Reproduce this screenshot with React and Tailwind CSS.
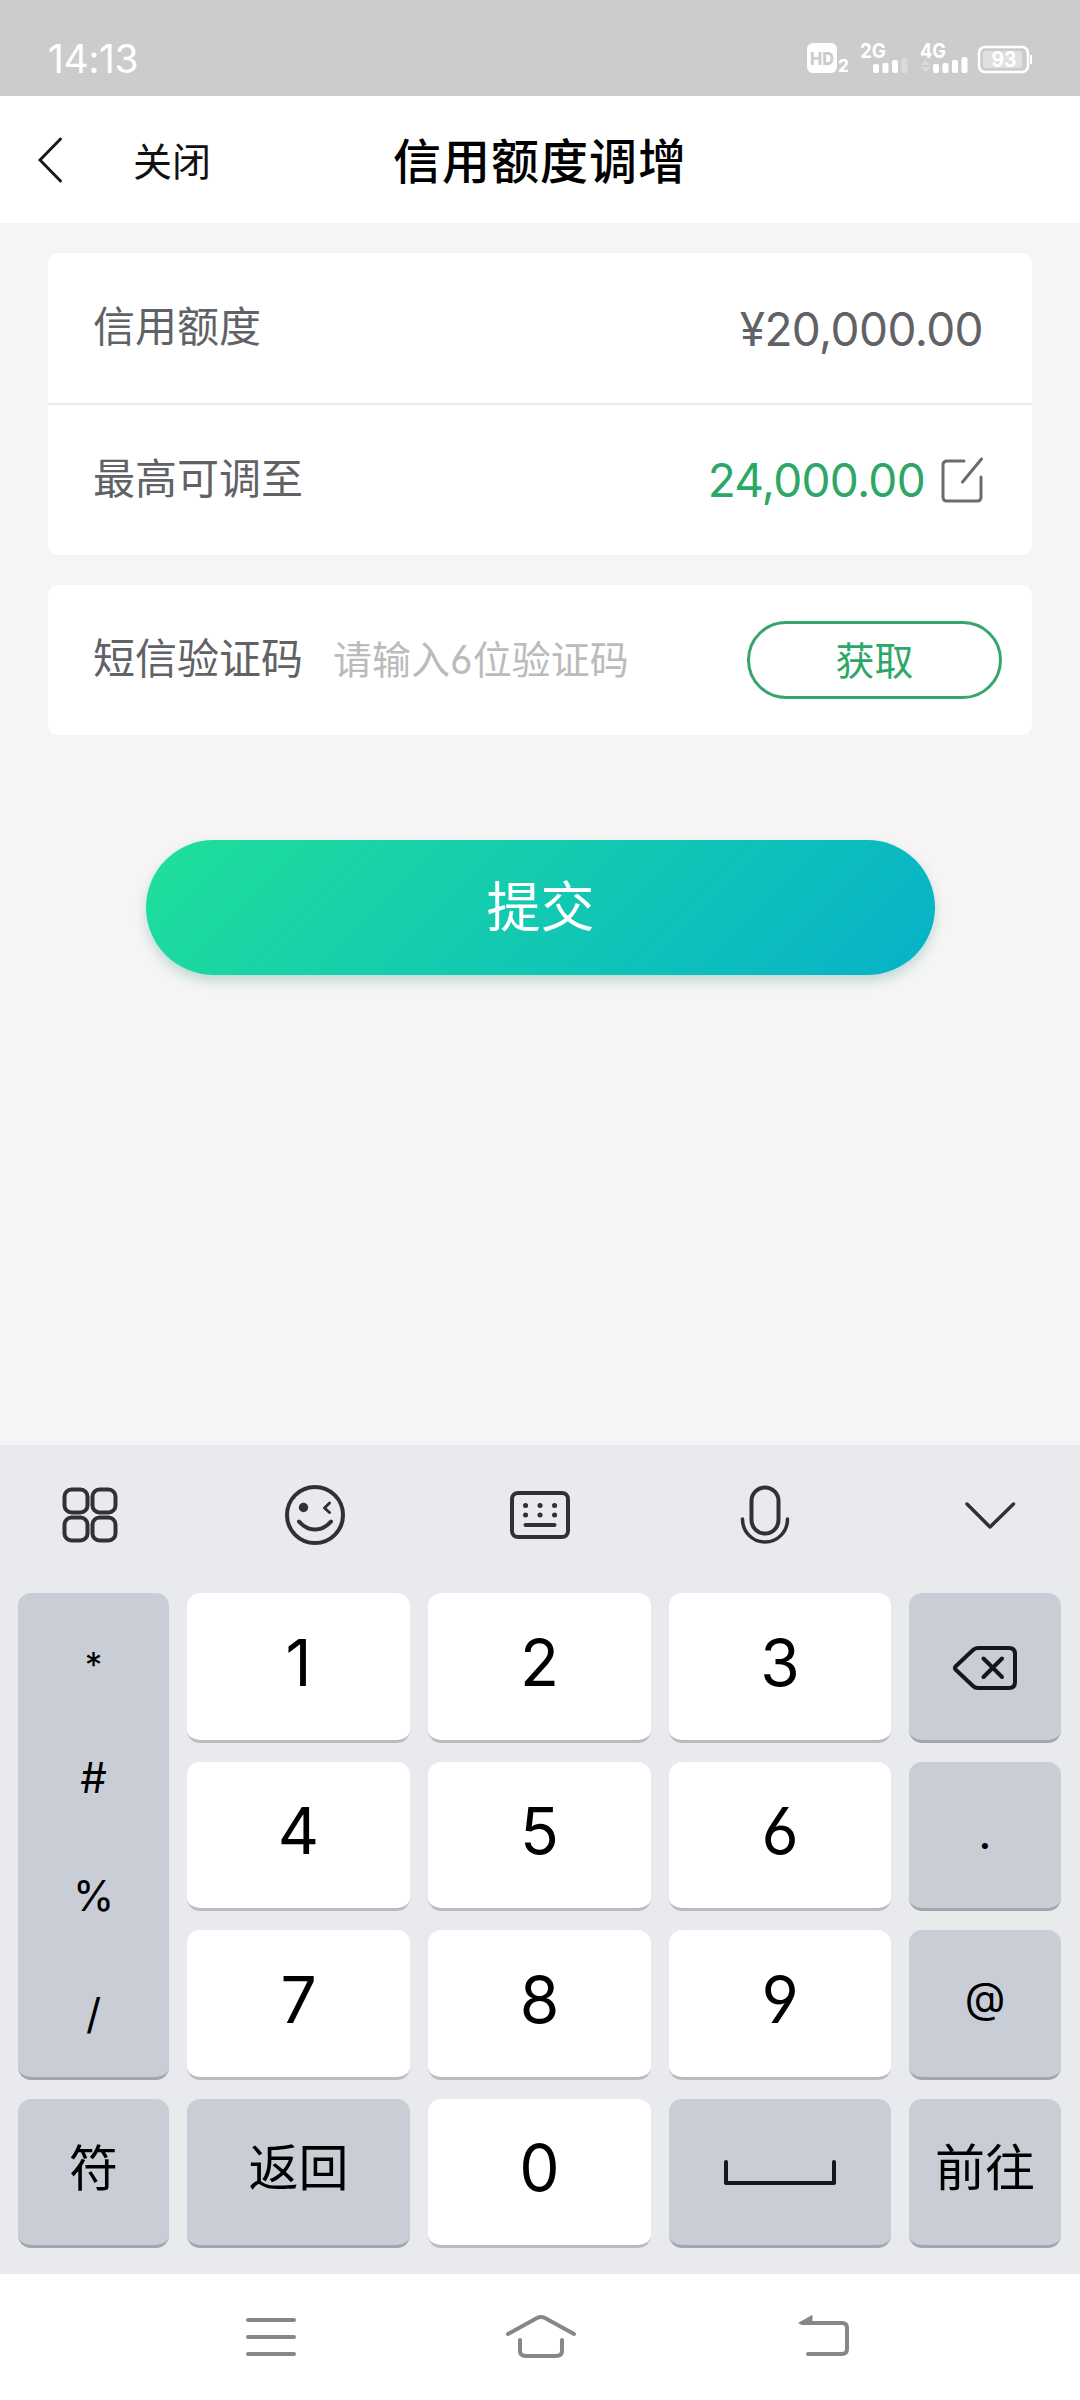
import React, { useState } from 'react';

const columnaSimbolos = ['*', '#', '%', '/'];

function BarraEstado() {
    return (
        <div className="flex h-24 items-start justify-between bg-[#cccccc] pl-12 pr-12 pt-[31px] text-white">
            <span className="pt-1 font-['Inter'] text-[39px] leading-[47px] tracking-[-0.4px]">14:13</span>
            <svg width="226" height="48" viewBox="806 31 226 48" fill="white">
                <rect x="807" y="43" width="30" height="30" rx="6" />
                <text x="822" y="65" fontSize="18" fontWeight="800" fontFamily="Inter" fill="#cccccc" textAnchor="middle" textLength="24" lengthAdjust="spacingAndGlyphs">HD</text>
                <text x="838" y="72" fontSize="17" fontWeight="800" fontFamily="Inter">2</text>
                <text x="860" y="58" fontSize="20" fontWeight="700" fontFamily="Inter" textLength="26" lengthAdjust="spacingAndGlyphs">2G</text>
                <rect x="873" y="64" width="6" height="9" rx="2" />
                <rect x="882.500" y="63" width="6" height="10" rx="2" />
                <rect x="892" y="60" width="6" height="13" rx="2" />
                <rect x="901.500" y="58" width="6" height="15" rx="2" opacity="0.3" />
                <text x="920" y="58" fontSize="20" fontWeight="700" fontFamily="Inter" textLength="26" lengthAdjust="spacingAndGlyphs">4G</text>
                <path d="M921 65 L925.500 60 L930 65 Z M921 67 L930 67 L925.500 72 Z" opacity="0.3" />
                <rect x="933" y="64" width="6" height="9" rx="2" />
                <rect x="942.500" y="63" width="6" height="10" rx="2" />
                <rect x="952" y="60" width="6" height="13" rx="2" />
                <rect x="961.500" y="57" width="6" height="16" rx="2" />
                <rect x="979" y="47" width="49" height="25" rx="6" fill="none" stroke="white" strokeWidth="2.500" />
                <rect x="983" y="51" width="39" height="17" rx="2" opacity="0.4" />
                <rect x="1030" y="55" width="2" height="9" />
                <text x="1004" y="67" fontSize="21" fontWeight="700" fontFamily="Inter" textAnchor="middle" textLength="25" lengthAdjust="spacingAndGlyphs">93</text>
            </svg>
        </div>
    );
}

function Encabezado() {
    return (
        <header className="grid h-[127px] grid-cols-[1fr_auto_1fr] items-center bg-white">
            <div className="flex items-center pl-[38px]">
                <svg width="25" height="46" viewBox="0 0 25 46" fill="none" stroke="#1a1a1a" strokeWidth="3" strokeLinecap="round">
                    <path d="M22.500 2 L2 23 L22.500 44" />
                </svg>
                <span className="ml-[70px] pt-[3px] text-[39px] leading-none text-[#111111]">关闭</span>
            </div>
            <h1 className="pt-1 text-[48px] font-medium leading-none tracking-[1px] text-black">信用额度调增</h1>
            <div />
        </header>
    );
}

function Teclado() {
    return (
        <section className="h-[829px] bg-[#e9eaee]">
            <div className="flex h-[148px] items-center px-[18px]">
                <svg width="1044" height="70" viewBox="18 1480 1044 70" fill="none" stroke="#303134" strokeWidth="4" strokeLinecap="round" strokeLinejoin="round" className="mt-[-8px]">
                    <rect x="64.500" y="1489.500" width="23" height="23" rx="7" />
                    <rect x="92.500" y="1489.500" width="23" height="23" rx="7" />
                    <rect x="64.500" y="1517.500" width="23" height="23" rx="7" />
                    <rect x="92.500" y="1517.500" width="23" height="23" rx="7" />

                    <circle cx="315" cy="1515" r="28" />
                    <circle cx="303.500" cy="1507.500" r="4.700" fill="#303134" stroke="none" />
                    <path d="M329.500 1503 L324.500 1508 L329.500 1512.500" strokeWidth="3" />
                    <path d="M299 1521.500 Q306 1529.500 315 1529.500 Q324 1529.500 331 1521.500" />

                    <rect x="512" y="1493" width="56" height="44" rx="6" />
                    <path d="M525.500 1505.500 h0.100 M540 1505.500 h0.100 M554.500 1505.500 h0.100 M525.500 1515 h0.100 M540 1515 h0.100 M554.500 1515 h0.100" strokeWidth="5" />
                    <path d="M525.500 1525 H554.500" />

                    <rect x="751.500" y="1487.500" width="27" height="46" rx="13.500" />
                    <path d="M742.500 1519 C742.500 1532 752.500 1542 765 1542 C777.500 1542 787.500 1532 787.500 1519" strokeWidth="3.500" />

                    <path d="M967 1504 L990 1527 L1013.500 1504" strokeWidth="3.500" />
                </svg>
            </div>

            <div className="grid h-[655px] grid-cols-[151px_223px_223px_222px_152px] grid-rows-4 gap-x-[18px] gap-y-[19px] pl-[18px] text-black">
                <div className="row-span-3 flex flex-col items-center rounded-[13px] border-b-[3px] border-[#a2a6ad] bg-[#c9cdd5] pt-[11px] font-['Inter'] text-[42px]">
                    {columnaSimbolos.map(s => (
                        <span key={s} className={s === '*' ? 'flex h-[118px] items-center pt-1 text-[35px]' : 'flex h-[118px] items-center pb-2'}>{s}</span>
                    ))}
                </div>
                <Tecla texto="1" />
                <Tecla texto="2" />
                <Tecla texto="3" />
                <Tecla gris>
                    <svg width="66" height="46" viewBox="952 1645 66 46" fill="none" stroke="#15171a" strokeWidth="4" strokeLinecap="round" strokeLinejoin="round" className="mt-[3px]">
                        <path d="M978 1648 H1009 Q1015 1648 1015 1654 V1682 Q1015 1688 1009 1688 H978 Q975 1688 973 1686 L956 1670 Q954 1668 956 1666 L973 1650 Q975 1648 978 1648 Z" />
                        <path d="M983.500 1658.500 L1002 1677 M1002 1658.500 L983.500 1677" />
                    </svg>
                </Tecla>

                <Tecla texto="4" />
                <Tecla texto="5" />
                <Tecla texto="6" />
                <Tecla gris><span className="pb-1 font-['Inter'] text-[46px]">.</span></Tecla>

                <Tecla texto="7" />
                <Tecla texto="8" />
                <Tecla texto="9" />
                <Tecla gris><span className="pb-3 font-['Inter'] text-[42px]">@</span></Tecla>

                <Tecla gris><span className="pb-[6px] text-[49px]">符</span></Tecla>
                <Tecla gris><span className="pb-[6px] text-[50px]">返回</span></Tecla>
                <Tecla texto="0" />
                <Tecla gris>
                    <svg width="112" height="26" viewBox="0 0 112 26" fill="none" stroke="#15171a" strokeWidth="4" strokeLinecap="round" strokeLinejoin="round">
                        <path d="M2 3 V24 H110 V3" />
                    </svg>
                </Tecla>
                <Tecla gris><span className="pb-[6px] text-[50px]">前往</span></Tecla>
            </div>
        </section>
    );
}

function Tecla({ texto, gris, children }) {
    return (
        <button
            type="button"
            className={gris
                ? 'flex items-center justify-center rounded-[13px] border-b-[3px] border-[#a2a6ad] bg-[#c9cdd5]'
                : 'flex items-center justify-center rounded-[13px] border-b-[3px] border-[#bbbcc0] bg-white'}
        >
            {texto ? (
                <span className="pb-[7px] font-['Inter'] text-[64px] leading-none [font-feature-settings:'cv03','cv04']">{texto}</span>
            ) : children}
        </button>
    );
}

function BarraNavegacion() {
    return (
        <nav className="flex h-[126px] items-start bg-white pl-[246px] pt-[40px]">
            <svg width="50" height="46" viewBox="246 2314 50 46" fill="none" stroke="#878787" strokeWidth="4" strokeLinecap="round">
                <path d="M248 2320 H294 M248 2337 H294 M248 2354 H294" />
            </svg>
            <svg width="72" height="46" viewBox="505 2314 72 46" fill="none" stroke="#878787" strokeWidth="4" strokeLinecap="round" strokeLinejoin="round" className="ml-[209px]">
                <path d="M508 2334 L537 2318 Q541 2316 545 2318 L574 2334" />
                <path d="M520 2340 V2351 Q520 2356 526 2356 H556 Q562 2356 562 2351 V2340" />
            </svg>
            <svg width="52" height="46" viewBox="798 2314 52 46" fill="none" stroke="#878787" strokeWidth="4" strokeLinecap="round" className="ml-[221px]">
                <path d="M802 2323 H842 Q847 2323 847 2328 V2349 Q847 2354 842 2354 H808" />
                <path d="M799 2323 L812 2315.500 V2323 Z" fill="#878787" strokeWidth="1" />
            </svg>
        </nav>
    );
}

function App() {
    const [codigo, setCodigo] = useState('');

    return (
        <div className="flex h-[2400px] w-[1080px] flex-col overflow-hidden bg-[#f5f5f5] font-['Inter','Noto_Sans_CJK_SC',sans-serif]">
            <BarraEstado />
            <Encabezado />

            <main className="flex flex-1 flex-col px-12 pt-[30px] text-[42px] text-[#606266]">
                <div className="rounded-[9px] bg-white">
                    <div className="flex h-[152px] items-center justify-between border-b-2 border-[#ebebeb] pl-[45px] pr-[49px]">
                        <span className="pb-[2px] leading-none">信用额度</span>
                        <span className="pt-[2px] text-[46px] leading-none tracking-[-0.6px]">¥20,000.00</span>
                    </div>
                    <div className="flex h-[150px] items-center pl-[45px] pr-[49px]">
                        <span className="pb-[2px] leading-none">最高可调至</span>
                        <span className="ml-auto text-[46px] leading-none tracking-[-0.7px] text-[#2ba768]">24,000.00</span>
                        <svg width="42" height="46" viewBox="0 0 42 46" fill="none" stroke="#6b6c6e" strokeWidth="3" strokeLinecap="round" className="ml-4">
                            <path d="M23 4 H6 Q2 4 2 8 V40 Q2 44 6 44 H36 Q40 44 40 40 V20" />
                            <path d="M21.500 25 L40.500 2" />
                        </svg>
                    </div>
                </div>

                <div className="mt-[30px] flex h-[150px] items-center rounded-[9px] bg-white pl-[45px] pr-[30px]">
                    <label htmlFor="codigo" className="pb-[2px] leading-none">短信验证码</label>
                    <input
                        type="text"
                        id="codigo"
                        name="codigo"
                        value={codigo}
                        placeholder="请输入6位验证码"
                        onChange={e => setCodigo(e.target.value)}
                        className="ml-[30px] w-[400px] bg-transparent text-[39px] placeholder-[#bbbbbb] focus:outline-none [font-feature-settings:'cv03']"
                    />
                    <button type="button" className="ml-auto h-[78px] w-[255px] rounded-full border-[3px] border-[#36a56e] text-[39px] leading-none text-[#2ba768]">
                        获取
                    </button>
                </div>

                <button
                    type="submit"
                    className="mt-[105px] ml-[98px] h-[135px] w-[789px] rounded-full bg-[linear-gradient(135deg,#1fe09a,#06b2c9)] text-[54px] leading-none text-white shadow-[0_6px_12px_rgba(0,120,100,0.22)]"
                >
                    提交
                </button>
            </main>

            <Teclado />
            <BarraNavegacion />
        </div>
    );
}

export default App;
